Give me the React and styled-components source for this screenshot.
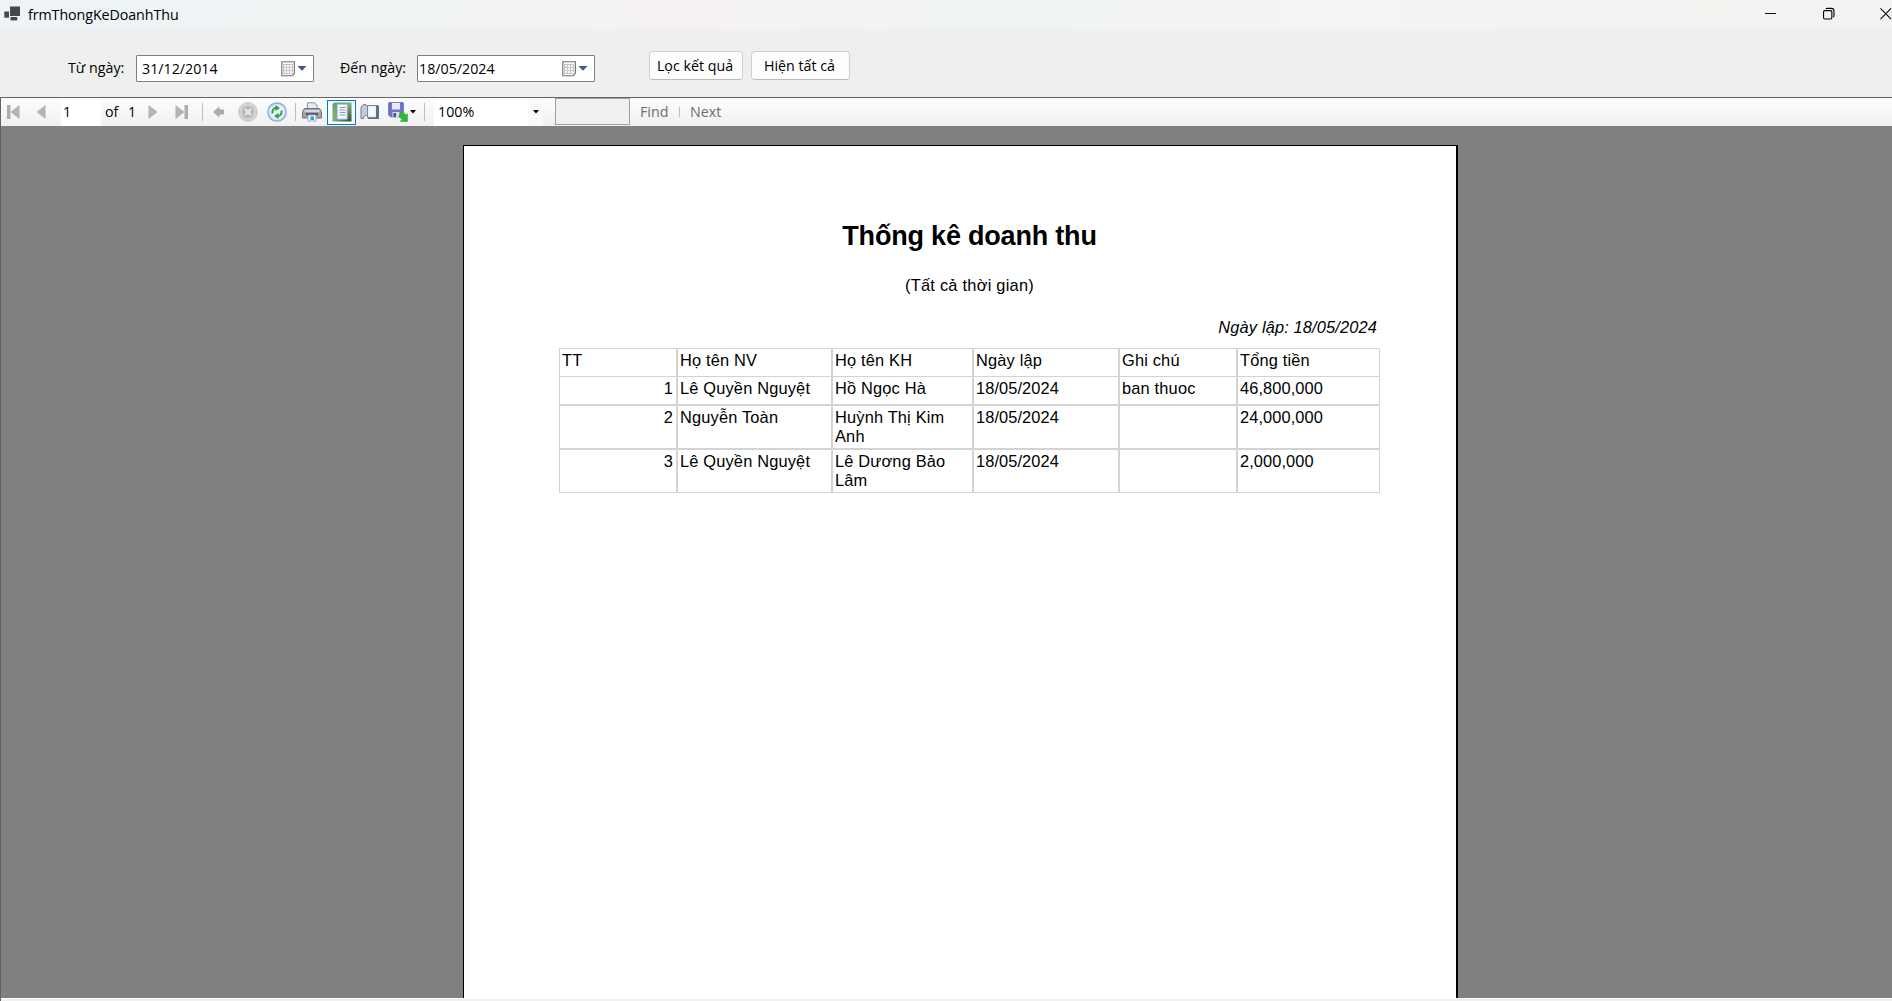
import React from "react";
import styled, { createGlobalStyle } from "styled-components";

const Global = createGlobalStyle`
  * { box-sizing: border-box; }
  html, body { margin: 0; padding: 0; overflow: hidden; }
  body { background: #f0f0f0; }
`;

const Window = styled.div`
  width: 100vw;
  height: 100vh;
  min-width: 1892px;
  display: flex;
  flex-direction: column;
  overflow: hidden;
  background: #efefef;
  color: #000;
  font: 14.25px/20px "Open Sans", "Noto Sans", sans-serif;
  white-space: nowrap;
  cursor: default;
`;

const TitleBar = styled.header`
  flex: none;
  height: 29px;
  display: flex;
  align-items: flex-start;
  padding: 5px 0 0 4px;
  background: linear-gradient(90deg, #eef3f5 0%, #eef3f4 20%, #f7f2f2 36%, #f0f4f4 52%, #f3f5f2 72%, #f3f2f0 100%);
`;

const Title = styled.span`
  margin-left: 8px;
  letter-spacing: -0.07px;
`;

const WindowButtons = styled.div`
  margin-left: auto;
  display: flex;
  gap: 45.5px;
  padding-top: 2px;
  width: 127px;
`;

const Filters = styled.section`
  flex: none;
  height: 68px;
  display: flex;
  align-items: flex-start;
  padding: 22px 0 0 68px;
`;

const FieldLabel = styled.label`
  width: ${(p) => p.$width}px;
  padding-top: 7px;
`;

const DateBox = styled.div`
  width: 178px;
  height: 27px;
  margin: 4px ${(p) => p.$after}px 0 0;
  padding: 0 6px 0 ${(p) => p.$inset}px;
  display: flex;
  align-items: center;
  background: #fff;
  border: 1px solid #7f7f7f;
  border-radius: 1px;
`;

const DateValue = styled.span`
  flex: 1;
`;

const PushButton = styled.button`
  width: ${(p) => p.$width}px;
  height: 29px;
  margin: 0 8px 0 0;
  padding: 0 2px 0 0;
  border: 1px solid #d0d0d0;
  border-bottom-color: #bcbcbc;
  border-radius: 4px;
  background: #fdfdfd;
  color: #000;
  font: inherit;
`;

const Viewer = styled.main`
  flex: 1;
  min-height: 0;
  display: flex;
  flex-direction: column;
  border-top: 1px solid #646464;
  border-left: 1px solid #646464;
`;

const Toolbar = styled.nav`
  flex: none;
  height: 28px;
  display: flex;
  align-items: center;
  background: linear-gradient(#fdfdfd, #f0f0f0);
`;

const Tool = styled.span`
  flex: none;
  display: flex;
  align-items: center;
  justify-content: center;
  width: ${(p) => p.$width || 20}px;
  height: 25px;
  margin-left: ${(p) => p.$gap || 0}px;
  border: ${(p) => (p.$active ? "1px solid #0078d7" : "0")};
  background: ${(p) => (p.$active ? "#fbfcfe" : "transparent")};
`;

const Divider = styled.i`
  flex: none;
  width: 1px;
  height: ${(p) => p.$height || 18}px;
  margin-left: ${(p) => p.$gap}px;
  background: #bdbdbd;
`;

const ToolText = styled.span`
  flex: none;
  width: ${(p) => p.$width}px;
  margin-left: ${(p) => p.$gap}px;
  color: ${(p) => (p.$muted ? "#6d6d6d" : "#000")};
`;

const PageInput = styled.div`
  flex: none;
  width: 40px;
  height: 28px;
  margin-left: 13px;
  padding: 4px 0 0 2px;
  background: #fff;
`;

const Zoom = styled.div`
  flex: none;
  display: flex;
  align-items: center;
  justify-content: space-between;
  width: 109px;
  height: 28px;
  margin-left: 9px;
  padding: 0 4px;
  background: linear-gradient(90deg, #fff 94px, #fafafa 94px);
`;

const SearchBox = styled.div`
  flex: none;
  width: 75px;
  height: 27px;
  margin-left: 12px;
  align-self: flex-start;
  background: #f0f0f0;
  border: 1px solid #a0a0a0;
`;

const Desk = styled.div`
  flex: 1;
  min-height: 0;
  overflow: hidden;
  display: flex;
  padding: 19px 0 0 462px;
  background: #808080;
`;

const Footer = styled.div`
  flex: none;
  height: 3px;
  background: #f0f0f0;
  border-top: 1px solid #fff;
`;

const Paper = styled.article`
  flex: none;
  width: 995px;
  height: 1200px;
  padding: 72px 76px 0 95px;
  background: #fff;
  border: 1px solid #000;
  border-right-width: 2px;
  font: 16.4px/19px "Liberation Sans", Arial, sans-serif;
`;

const ReportTitle = styled.h1`
  margin: 0;
  text-align: center;
  font-size: 27px;
  line-height: 36px;
  font-weight: 700;
  letter-spacing: -0.2px;
`;

const Period = styled.p`
  margin: 21px 0 0;
  text-align: center;
  line-height: 20px;
  letter-spacing: 0.25px;
`;

const Issued = styled.p`
  margin: 22px 3px 0 0;
  text-align: right;
  font-style: italic;
  line-height: 20px;
  letter-spacing: 0.14px;
`;

const Table = styled.div`
  display: grid;
  width: 821px;
  margin-top: 11px;
  grid-template-columns: 118px 155px 141px 146px 118px 142px;
  grid-template-rows: 28px 29px 44px 43px;
  border-top: 1px solid #d3d3d3;
  border-left: 1px solid #d3d3d3;
`;

const Cell = styled.div`
  padding: 2px 3px 0 2px;
  text-align: ${(p) => (p.$right ? "right" : "left")};
  white-space: normal;
  letter-spacing: ${(p) => (p.$numeric ? 0.09 : 0.17)}px;
  border-style: solid;
  border-color: #d3d3d3;
  border-width: 0 ${(p) => (p.$last ? 1 : 2)}px ${(p) => (p.$thin ? 1 : 2)}px 0;
`;

const header = ["TT", "Họ tên NV", "Họ tên KH", "Ngày lập", "Ghi chú", "Tổng tiền"];
const rows = [
  ["1", "Lê Quyền Nguyệt", "Hồ Ngọc Hà", "18/05/2024", "ban thuoc", "46,800,000"],
  ["2", "Nguyễn Toàn", "Huỳnh Thị Kim Anh", "18/05/2024", "", "24,000,000"],
  ["3", "Lê Quyền Nguyệt", "Lê Dương Bảo Lâm", "18/05/2024", "", "2,000,000"],
];

const AppIcon = () => (
  <svg width="16" height="16" viewBox="0 0 16 16">
    <path fill="#484848" d="M6 1.500h10v9.500H6z" />
    <path fill="#484848" d="M.3 6.500H5v6.200H.3z" />
    <path fill="#484848" d="M6.500 12h6.700v3.400H6.500z" />
  </svg>
);

const CalendarIcon = () => (
  <svg width="26" height="16" viewBox="0 0 26 16">
    <path d="M.8.8h12.600v11.400l-2 2.500H.8z" fill="#faf8f7" stroke="#77706e" strokeWidth="1.100" />
    <path d="M13.600 12l-2.200 3v-3z" fill="#a9a2a0" />
    <path d="M2.500 3.500h9M2.500 6.500h9M2.500 9.500h9M2.500 12.500h8M2.500 3v10M5.500 3v10M8.500 3v10M11.500 3v8" stroke="#c3c7cd" fill="none" />
    <path d="M16.500 5h9L21 9.800z" fill="#44598a" />
  </svg>
);

const Arrow = ({ flip, bar }) => (
  <svg width="14" height="16" viewBox="0 0 14 16">
    <g transform={flip ? "translate(14 0) scale(-1 1)" : undefined}>
      <path d={bar ? "M13.500 1v14L4.500 8z" : "M11.500 1v14L2.500 8z"} fill="#b4b4b4" />
      {bar && <path d="M1 1h3.500v14H1z" fill="#aeaeae" />}
    </g>
  </svg>
);

const BackIcon = () => (
  <svg width="12" height="12" viewBox="0 0 12 12">
    <path d="M0 6l6.500-5.500v3H11v5H6.500v3z" fill="#ababab" />
  </svg>
);

const StopIcon = () => (
  <svg width="20" height="20" viewBox="0 0 20 20">
    <circle cx="10" cy="10" r="9.300" fill="#d4d4d4" stroke="#c2c2c2" />
    <circle cx="10" cy="10" r="6.300" fill="#bababa" />
    <path d="M7 7l6 6M13 7l-6 6" stroke="#e8e8e8" strokeWidth="2.200" />
  </svg>
);

const RefreshIcon = () => (
  <svg width="20" height="20" viewBox="0 0 20 20">
    <circle cx="10" cy="10" r="9.200" fill="#cfe0f6" stroke="#86a8d8" strokeWidth="1.200" />
    <circle cx="10" cy="10" r="7" fill="#eaf3fc" />
    <path d="M5.500 11.500C5 8 6.500 6.200 9 6M14.500 8.500C15 12 13.500 13.800 11 14" fill="none" stroke="#2fa336" strokeWidth="2" />
    <path d="M8.500 3l4.500 3-4.500 3zM11.500 17L7 14l4.500-3z" fill="#2fa336" />
  </svg>
);

const PrinterIcon = () => (
  <svg width="20" height="20" viewBox="0 0 20 20">
    <path d="M5.500 8V.8h7l2.500 2.400V8z" fill="#e4edf7" stroke="#8295a8" />
    <path d="M2.500 6.500h15l2 3v6.500H.5V9.500z" fill="#a2a4a8" stroke="#6d7075" />
    <path d="M2.500 8h15v2h-15z" fill="#d6d8db" />
    <path d="M4 11h12v2.500H4z" fill="#55585e" />
    <path d="M6 13h8v6H6z" fill="#f3f9ff" stroke="#8bb2d6" />
    <path d="M8.500 14.500H12v3.500H8.500z" fill="#3d98d8" />
  </svg>
);

const LayoutIcon = () => (
  <svg width="20" height="20" viewBox="0 0 20 20">
    <defs>
      <linearGradient id="cover" x1="0" y1="0" x2="1" y2="1">
        <stop offset="0" stopColor="#6f9f72" />
        <stop offset="0.5" stopColor="#7fae82" />
        <stop offset="1" stopColor="#2a4a34" />
      </linearGradient>
    </defs>
    <path d="M2 .5h17.500v19H.5V2z" fill="url(#cover)" />
    <path d="M5.500 2.500h9.500v14.500H5.500z" fill="#f5f9ff" stroke="#b9cbe0" />
    <path d="M7.500 5.500h6M7.500 8h6M7.500 10.500h6M7.500 13h6" stroke="#8a9ac0" />
  </svg>
);

const SetupIcon = () => (
  <svg width="20" height="18" viewBox="0 0 20 18">
    <path d="M1 15.500V6c0-3 1.500-4.500 4-4.500L7.500 3v10c-1.500-1-3-.5-3.500.5l-.5 2z" fill="#c3ccd8" stroke="#737d8a" />
    <path d="M7.500 2.500H18v12.300H7.500z" fill="#e3eefa" stroke="#7c8795" />
    <path d="M16 3h3v13H8v-1.500h8z" fill="#616f86" />
    <path d="M9.500 4h5.500v9H9.500z" fill="#f4faff" />
  </svg>
);

const SaveIcon = () => (
  <svg width="20" height="20" viewBox="0 0 20 20">
    <path d="M.8.8h14.400v14H2.500L.8 13z" fill="#7074cc" stroke="#5659ae" />
    <path d="M4 1h8v6.500H4z" fill="#e8ebf8" />
    <path d="M4.500 10h7v5h-7z" fill="#d8dbe8" />
    <path d="M5.500 11H8v4H5.500z" fill="#4a4e84" />
    <path d="M11.500 11.500l2.500-2 3 3 2-.5v7.500H11.500l2-2-3-3z" transform="translate(.5 0)" fill="#30b83a" stroke="#22a02c" strokeWidth=".5" />
  </svg>
);

const Caret = () => (
  <svg width="6" height="4" viewBox="0 0 6 4">
    <path d="M0 0h6L3 3.500z" fill="#000" />
  </svg>
);

const MinimizeIcon = () => (
  <svg width="13" height="13" viewBox="0 0 13 13">
    <path d="M0 6.500h12" stroke="#000" />
  </svg>
);

const RestoreIcon = () => (
  <svg width="13" height="13" viewBox="0 0 13 13">
    <rect x=".6" y="3.400" width="9" height="9" rx="1.300" fill="none" stroke="#000" strokeWidth="1.200" />
    <path d="M3 1.600C3.500 1.100 4 1 5 1h4c2 0 2.900 1 2.900 3v4.400c0 1-.2 1.500-.7 2" fill="none" stroke="#000" strokeWidth="1.200" />
  </svg>
);

const CloseIcon = () => (
  <svg width="13" height="13" viewBox="0 0 13 13">
    <path d="M.5 1l11.500 11.500M12 1L.5 12.500" stroke="#000" strokeWidth="1.100" />
  </svg>
);

export default function App() {
  return (
    <Window>
      <Global />
      <TitleBar>
        <AppIcon />
        <Title>frmThongKeDoanhThu</Title>
        <WindowButtons>
          <MinimizeIcon />
          <RestoreIcon />
          <CloseIcon />
        </WindowButtons>
      </TitleBar>
      <Filters>
        <FieldLabel $width={68}>Từ ngày:</FieldLabel>
        <DateBox $after={26} $inset={5}>
          <DateValue>31/12/2014</DateValue>
          <CalendarIcon />
        </DateBox>
        <FieldLabel $width={77}>Đến ngày:</FieldLabel>
        <DateBox $after={54} $inset={1}>
          <DateValue>18/05/2024</DateValue>
          <CalendarIcon />
        </DateBox>
        <PushButton $width={94}>Lọc kết quả</PushButton>
        <PushButton $width={99}>Hiện tất cả</PushButton>
      </Filters>
      <Viewer>
        <Toolbar>
          <Tool $width={14} $gap={5}><Arrow bar /></Tool>
          <Tool $width={14} $gap={14}><Arrow /></Tool>
          <PageInput>1</PageInput>
          <ToolText $gap={4} $width={24}>of</ToolText>
          <ToolText $gap={-1} $width={12}>1</ToolText>
          <Tool $width={14} $gap={6}><Arrow flip /></Tool>
          <Tool $width={14} $gap={15}><Arrow bar flip /></Tool>
          <Divider $gap={13} />
          <Tool $width={12} $gap={10}><BackIcon /></Tool>
          <Tool $gap={13}><StopIcon /></Tool>
          <Tool $gap={9}><RefreshIcon /></Tool>
          <Divider $gap={8} />
          <Tool $gap={6}><PrinterIcon /></Tool>
          <Tool $width={29} $gap={5} $active><LayoutIcon /></Tool>
          <Tool $gap={4}><SetupIcon /></Tool>
          <Tool $gap={8}><SaveIcon /></Tool>
          <Tool $width={6} $gap={2}><Caret /></Tool>
          <Divider $gap={8} />
          <Zoom>
            <span>100%</span>
            <Caret />
          </Zoom>
          <SearchBox />
          <ToolText $gap={10} $width={28} $muted>Find</ToolText>
          <Divider $gap={11} $height={10} />
          <ToolText $gap={10} $width={34} $muted>Next</ToolText>
        </Toolbar>
        <Desk>
          <Paper>
            <ReportTitle>Thống kê doanh thu</ReportTitle>
            <Period>(Tất cả thời gian)</Period>
            <Issued>Ngày lập: 18/05/2024</Issued>
            <Table>
              {[header, ...rows].map((row, r) =>
                row.map((text, c) => (
                  <Cell
                    key={`${r}-${c}`}
                    $right={r > 0 && c === 0}
                    $numeric={r > 0 && (c === 3 || c === 5)}
                    $last={c === 5}
                    $thin={r === 0 || r === 3}
                  >
                    {text}
                  </Cell>
                ))
              )}
            </Table>
          </Paper>
        </Desk>
        <Footer />
      </Viewer>
    </Window>
  );
}
